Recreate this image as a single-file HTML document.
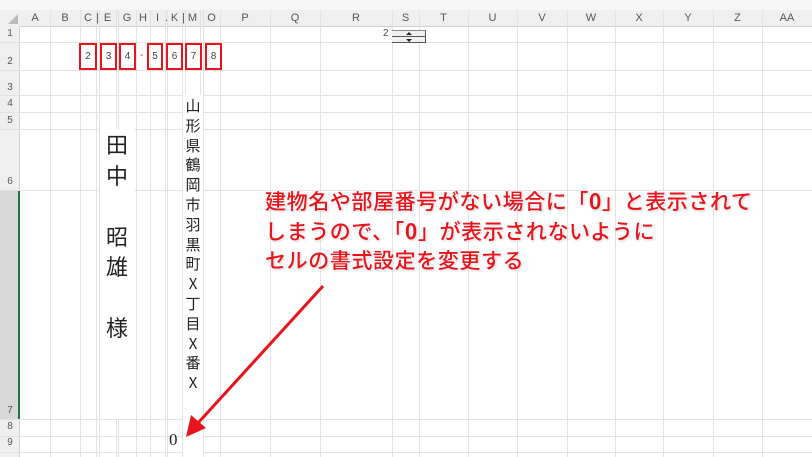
<!DOCTYPE html>
<html><head><meta charset="utf-8"><style>
*{margin:0;padding:0;box-sizing:border-box}
body{width:812px;height:457px;overflow:hidden;background:#fff;position:relative;font-family:"Liberation Sans","Noto Sans CJK JP",sans-serif}
.a{position:absolute}
.vl{position:absolute;top:10px;width:1px;height:447px;background:#e2e2e2}
.hl{position:absolute;left:0;height:1px;width:812px;background:#e2e2e2}
.ch{position:absolute;top:10px;height:17px;font-size:11px;color:#555;text-align:center;line-height:17px}
.rh{position:absolute;left:0;width:20px;font-size:10px;color:#555;text-align:center}
.box{position:absolute;top:43px;height:27px;border:2px solid #e8141b;font-size:10px;color:#444;text-align:center;line-height:23px}
.call{position:absolute;left:265px;font-size:21px;letter-spacing:0.6px;color:#e8141b;white-space:nowrap;font-family:"Noto Sans CJK JP",sans-serif;font-weight:500;text-shadow:0 0 2px #fff,0 0 3px #fff,1px 1px 2px #bbb}
</style></head><body>
<div class="a" style="left:0;top:0;width:812px;height:10px;background:#f7f7f7"></div>
<div class="a" style="left:0;top:10px;width:812px;height:17px;background:#efefef;border-bottom:1px solid #cfcfcf"></div>
<div class="a" style="left:0;top:10px;width:20px;height:447px;background:#efefef;border-right:1px solid #cfcfcf"></div>
<div class="a" style="left:0;top:190px;width:20px;height:229px;background:#d8d8d8;border-right:2px solid #217346"></div>
<div class="vl" style="left:50px"></div><div class="vl" style="left:80px"></div><div class="vl" style="left:96px"></div><div class="vl" style="left:99px"></div><div class="vl" style="left:116px"></div><div class="vl" style="left:118px"></div><div class="vl" style="left:136px"></div><div class="vl" style="left:150px"></div><div class="vl" style="left:165px"></div><div class="vl" style="left:167px"></div><div class="vl" style="left:182px"></div><div class="vl" style="left:185px"></div><div class="vl" style="left:200px"></div><div class="vl" style="left:203px"></div><div class="vl" style="left:220px"></div><div class="vl" style="left:270px"></div><div class="vl" style="left:320px"></div><div class="vl" style="left:392px"></div><div class="vl" style="left:419px"></div><div class="vl" style="left:468px"></div><div class="vl" style="left:517px"></div><div class="vl" style="left:567px"></div><div class="vl" style="left:615px"></div><div class="vl" style="left:663px"></div><div class="vl" style="left:713px"></div><div class="vl" style="left:762px"></div>
<div class="hl" style="top:42px"></div><div class="hl" style="top:70px"></div><div class="hl" style="top:95px"></div><div class="hl" style="top:112px"></div><div class="hl" style="top:129px"></div><div class="hl" style="top:190px"></div><div class="hl" style="top:419px"></div><div class="hl" style="top:436px"></div><div class="hl" style="top:452px"></div>
<div class="a" style="left:100px;top:129px;width:34px;height:290px;background:#fff"></div>
<div class="a" style="left:183px;top:95px;width:20px;height:362px;background:#fff"></div>
<div class="a" style="left:0;top:10px;width:20px;height:17px;background:#efefef"></div>
<div class="ch" style="left:20px;width:30px">A</div><div class="ch" style="left:50px;width:30px">B</div><div class="ch" style="left:80px;width:16px">C</div><div class="ch" style="left:96px;width:3px">|</div><div class="ch" style="left:99px;width:17px">E</div><div class="ch" style="left:118px;width:18px">G</div><div class="ch" style="left:136px;width:14px">H</div><div class="ch" style="left:150px;width:15px">I</div><div class="ch" style="left:165px;width:2px">.</div><div class="ch" style="left:167px;width:15px">K</div><div class="ch" style="left:182px;width:3px">|</div><div class="ch" style="left:185px;width:15px">M</div><div class="ch" style="left:203px;width:17px">O</div><div class="ch" style="left:220px;width:50px">P</div><div class="ch" style="left:270px;width:50px">Q</div><div class="ch" style="left:320px;width:72px">R</div><div class="ch" style="left:392px;width:27px">S</div><div class="ch" style="left:419px;width:49px">T</div><div class="ch" style="left:468px;width:49px">U</div><div class="ch" style="left:517px;width:50px">V</div><div class="ch" style="left:567px;width:48px">W</div><div class="ch" style="left:615px;width:48px">X</div><div class="ch" style="left:663px;width:50px">Y</div><div class="ch" style="left:713px;width:49px">Z</div><div class="ch" style="left:762px;width:50px">AA</div>
<div class="a" style="left:8px;top:14px;width:0;height:0;border-left:10px solid transparent;border-bottom:10px solid #bbb"></div>
<div class="rh" style="top:28px">1</div><div class="rh" style="top:56px">2</div><div class="rh" style="top:82px">3</div><div class="rh" style="top:98px">4</div><div class="rh" style="top:115px">5</div><div class="rh" style="top:176px">6</div><div class="rh" style="top:405px">7</div><div class="rh" style="top:421px">8</div><div class="rh" style="top:437px">9</div>
<div class="a" style="left:383px;top:28px;font-size:10px;color:#444">2</div>
<div class="a" style="left:392px;top:30px;width:34px;height:13px;background:#f0f0f0;border-right:1px solid #555;border-bottom:1px solid #555;border-top:1px solid #888"></div>
<div class="a" style="left:392px;top:36px;width:34px;height:1px;background:#555"></div>
<div class="a" style="left:406px;top:32px;border-left:3px solid transparent;border-right:3px solid transparent;border-bottom:3px solid #222"></div>
<div class="a" style="left:406px;top:39px;border-left:3px solid transparent;border-right:3px solid transparent;border-top:3px solid #222"></div>
<div class="box" style="left:79px;width:18px">2</div><div class="box" style="left:100px;width:17px">3</div><div class="box" style="left:119px;width:17px">4</div>
<div class="a" style="left:140px;top:50px;font-size:10px;color:#e8141b">-</div>
<div class="box" style="left:147px;width:16px">5</div><div class="box" style="left:166px;width:17px">6</div><div class="box" style="left:185px;width:17px">7</div><div class="box" style="left:205px;width:17px">8</div>
<div class="a" style="left:106px;top:131px;font-size:22px;line-height:30.5px;color:#222;width:24px">田<br>中<br><br>昭<br>雄<br><br>様</div>
<div class="a" style="left:184px;top:96px;font-size:15px;line-height:19.8px;color:#222;width:18px;text-align:center;font-family:'Noto Sans CJK JP',sans-serif">山<br>形<br>県<br>鶴<br>岡<br>市<br>羽<br>黒<br>町<br>X<br>丁<br>目<br>X<br>番<br>X</div>
<div class="a" style="left:169px;top:430px;font-size:17px;color:#222;font-family:'Liberation Serif',serif">0</div>
<div class="call" style="top:186px">建物名や部屋番号がない場合に「<b>0</b>」と表示されて</div>
<div class="call" style="top:216px">しまうので、「<b>0</b>」が表示されないように</div>
<div class="call" style="top:245px">セルの書式設定を変更する</div>
<svg class="a" style="left:0;top:0" width="812" height="457"><line x1="323" y1="286" x2="198" y2="423" stroke="#e8141b" stroke-width="3"/><polygon points="186,437 191,415 206,428" fill="#e8141b"/></svg>
</body></html>
